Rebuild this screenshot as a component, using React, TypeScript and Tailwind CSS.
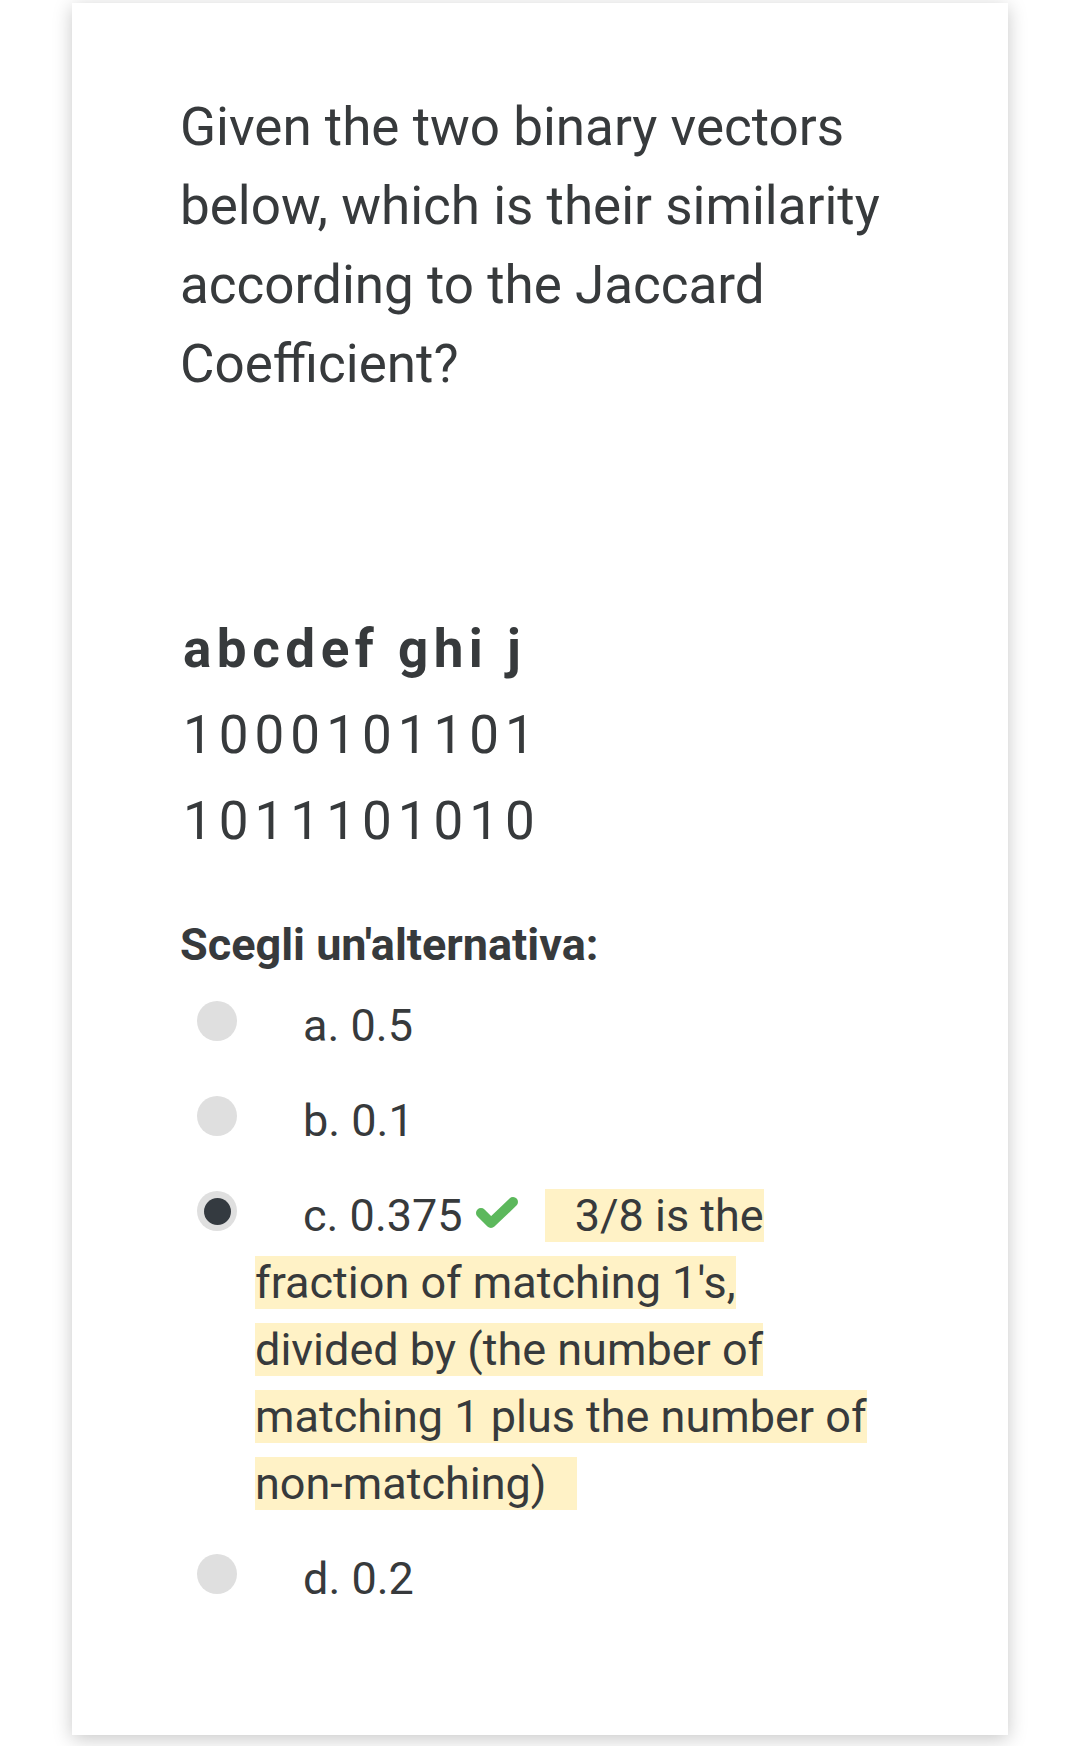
import React from "react";

type Option = { key: string; value: string; selected?: boolean };

const options: Option[] = [
  { key: "a.", value: "0.5" },
  { key: "b.", value: "0.1" },
  { key: "c.", value: "0.375", selected: true },
  { key: "d.", value: "0.2" },
];

function Radio({ selected }: { selected?: boolean }) {
  return (
    <span className="mt-[9px] flex h-10 w-10 shrink-0 items-center justify-center rounded-full bg-[#dfdfdf]">
      {selected && <span className="h-[27px] w-[27px] rounded-full bg-[#343a40]" />}
    </span>
  );
}

function CheckMark() {
  return (
    <svg
      width="52"
      height="40"
      viewBox="0 0 52 40"
      className="ml-[8px] mr-[22px] inline-block align-[-2px]"
    >
      <polyline
        points="10,20 20,30 42,9"
        fill="none"
        stroke="#5cb85c"
        strokeWidth="10"
        strokeLinecap="round"
        strokeLinejoin="round"
      />
    </svg>
  );
}

export default function App() {
  return (
    <div className="min-h-[1746px] bg-white pt-[3px] font-[Roboto,sans-serif] text-[#373a3c]">
      <div className="ml-[72px] h-[1732px] w-[936px] bg-white px-[108px] pt-[85px] shadow-[0_4px_18px_rgba(0,0,0,0.22)]">
        <p className="text-[53px] leading-[79px]">
          Given the two binary vectors below, which is their similarity according to the Jaccard Coefficient?
        </p>

        {/* vectors */}
        <div className="mt-[202px] pl-[3px] text-[53px] leading-[86px] tracking-[6px]">
          <p className="font-bold tracking-[5.5px]">abcdef ghi j</p>
          <p>1000101101</p>
          <p>1011101010</p>
        </div>

        <p className="mt-[47px] text-[45px] font-bold leading-[67px]">Scegli un'alternativa:</p>

        <div className="pr-[22px] text-[45px] leading-[67px]">
          {options.map((o) => (
            <div key={o.key} className="flex py-[14px] pl-[17px]">
              <Radio selected={o.selected} />
              <div className="ml-[18px] indent-[48px]">
                {o.key} {o.value}
                {o.selected && (
                  <>
                    <CheckMark />
                    <span className="bg-[#fff2c6] px-[30px]">
                      3/8 is the fraction of matching 1's, divided by (the number of matching 1 plus the number of non-matching)
                    </span>
                  </>
                )}
              </div>
            </div>
          ))}
        </div>
      </div>
    </div>
  );
}
